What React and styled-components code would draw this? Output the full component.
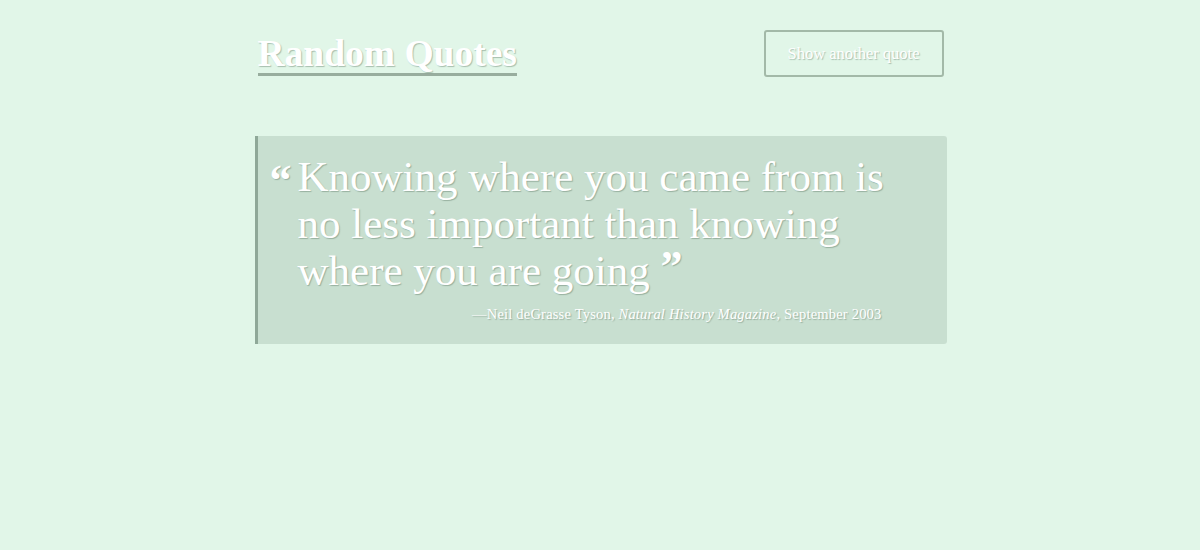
import React from 'react';
import styled, { createGlobalStyle } from 'styled-components';

const GlobalStyle = createGlobalStyle`
  html, body {
    margin: 0;
    padding: 0;
    background: #e1f6e8;
  }
  body {
    font-family: 'Liberation Serif', 'DejaVu Serif', serif;
  }
`;

const Page = styled.div`
  min-height: 550px;
  box-sizing: border-box;
  background: #e1f6e8;
  padding-top: 30px;
`;

const Container = styled.div`
  width: 692px;
  margin: 0 auto;
  padding-left: 1px;
`;

const Header = styled.header`
  display: flex;
  justify-content: space-between;
  align-items: flex-start;
  padding: 0 3px;
`;

const Title = styled.h1`
  margin: 5px 0 0 0;
  font-size: 37.5px;
  font-weight: 700;
  line-height: 37px;
  color: #ffffff;
  text-shadow: 1px 1px 1px rgba(60, 90, 70, 0.35);
  border-bottom: 3px solid #98ad9e;
  padding-bottom: 1px;
`;

const Button = styled.button`
  width: 180px;
  height: 47px;
  background: transparent;
  border: 2px solid #a3b9a8;
  border-radius: 3px;
  font-family: inherit;
  font-size: 16.5px;
  color: #ffffff;
  text-shadow: 1px 1px 1px rgba(60, 90, 70, 0.35);
  cursor: pointer;
`;

const Box = styled.blockquote`
  margin: 59px 0 0 0;
  display: grid;
  grid-template-columns: 28px 1fr;
  background: #c8dfd0;
  border-left: 3px solid #8fa898;
  border-radius: 0 3px 3px 0;
  padding: 17px 56px 21px 12px;
  color: #ffffff;
  text-shadow: 1px 1px 1px rgba(60, 90, 70, 0.35);
`;

const Mark = styled.span`
  font-size: 44px;
  font-weight: 700;
  line-height: 1;
  padding-top: 6px;
`;

const Content = styled.div`
  display: flex;
  flex-direction: column;
`;

const Text = styled.p`
  margin: 0;
  font-size: 43px;
  line-height: 47px;
`;

const CloseMark = styled.span`
  font-size: 44px;
  font-weight: 700;
  line-height: 0;
  vertical-align: 4px;
`;

const Cite = styled.footer`
  margin: 12px 9px 0 0;
  text-align: right;
  font-size: 14.5px;
  font-weight: 400;
  letter-spacing: 0.2px;
`;

const App = () => {
  return (
    <Page>
      <GlobalStyle />
      <Container>
        <Header>
          <Title>Random Quotes</Title>
          <Button>Show another quote</Button>
        </Header>
        <Box>
          <Mark>“</Mark>
          <Content>
            <Text>
              Knowing where you came from is no less important than knowing where you are going{' '}
              <CloseMark>”</CloseMark>
            </Text>
            <Cite>
              —Neil deGrasse Tyson, <em>Natural History Magazine</em>, September 2003
            </Cite>
          </Content>
        </Box>
      </Container>
    </Page>
  );
};

export default App;
